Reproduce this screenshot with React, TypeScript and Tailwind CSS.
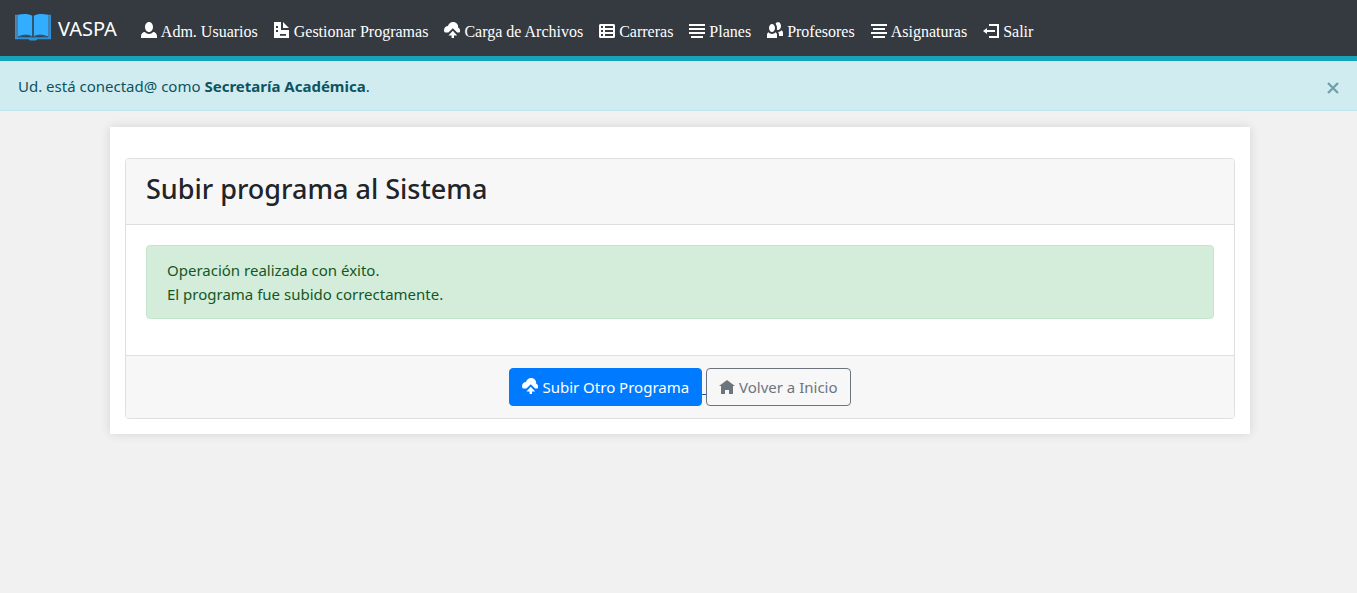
import { useState } from "react";

const icons = {
  person:
    "M4 0c-1.1 0-2 1.12-2 2.5s.9 2.5 2 2.5 2-1.12 2-2.5-.9-2.5-2-2.5zm-2.09 5c-1.06.05-1.91.92-1.91 2v1h8v-1c0-1.08-.84-1.95-1.91-2-.54.61-1.28 1-2.09 1-.81 0-1.55-.39-2.09-1z",
  document:
    "M0 0v8h7.500v-4h-4v-4h-3.500zm4.500 0v3h3l-3-3zm-3.500 2h1v1h-1v-1zm0 2h1v1h-1v-1zm2 2h3v.9h-3v-.9z",
  cloudUpload:
    "M4.5 0c-1.21 0-2.27.86-2.5 2-1.1 0-2 .9-2 2 0 .5.15 1 .5 1.300h1.700l2.200-2.200 2.200 2.200h1c.3-.25.49-.5.49-.9 0-.65-.42-1.29-1-1.5v-.4c0-1.38-1.12-2.5-2.5-2.500zm-.1 4.400l-2.200 2.400h1.600v1.200h1.200v-1.200h1.600l-2.200-2.400z",
  spreadsheet:
    "M.75 1c-.41 0-.75.34-.75.75v5.5c0 .41.34.75.75.75h6.5c.41 0 .75-.34.75-.75v-5.5c0-.41-.34-.75-.75-.75h-6.5zm.25 1h1v1h-1v-1zm2 0h4v1h-4v-1zm-2 2h1v1h-1v-1zm2 0h4v1h-4v-1zm-2 2h1v1h-1v-1zm2 0h4v1h-4v-1z",
  justify: "M0 1v1h8v-1h-8zm0 2v1h8v-1h-8zm0 2v1h8v-1h-8zm1 2v1h6v-1h-6z",
  people:
    "M5.5 0c-.51 0-.95.35-1.22.88.45.54.72 1.28.72 2.13 0 .29-.03.55-.09.81.19.11.38.19.59.19.83 0 1.5-.9 1.5-2s-.67-2-1.5-2zm-3 1c-.83 0-1.5.9-1.5 2s.67 2 1.5 2 1.5-.9 1.5-2-.67-2-1.5-2zm4.75 3.16c-.43.51-1.02.82-1.69.84.27.38.44.84.44 1.34v.66h2v-1.66c0-.52-.31-.97-.75-1.19zm-6.5 1c-.44.22-.75.67-.75 1.19v1.66h5v-1.66c0-.52-.31-.97-.75-1.19-.45.53-1.06.84-1.75.84s-1.3-.32-1.75-.84z",
  center: "M0 1v1h8v-1h-8zm1 2v1h6v-1h-6zm-1 2v1h8v-1h-8zm1 2v1h6v-1h-6z",
  logout: "M3 1v1h4v5h-4v1h5v-7h-5zm-1 2l-2 1.5 2 1.5v-1h4v-1h-4v-1z",
  home: "M4 1l-4 3h1v4h2v-2h2v2h2v-4.03l1 .03-4-3z",
};

type IconName = keyof typeof icons;

function Icon({ name, className }: { name: IconName; className: string }) {
  return (
    <svg viewBox="0 0 8 8" className={`size-4 shrink-0 fill-current ${className}`} aria-hidden="true">
      <path d={icons[name]} />
    </svg>
  );
}

function BookLogo() {
  return (
    <svg viewBox="0 0 38 30" className="h-[30px] w-[38px] pb-0.5" preserveAspectRatio="none" aria-hidden="true">
      <path d="M1 2h3v24h30V2h3v26H23.500l-1.500 1.500h-6L14.500 28H1z" fill="#2b93dc" />
      <path d="M2.200 3h1.500v23H2.200zM34.300 3h1.500v23h-1.500z" fill="#55799a" />
      <path
        d="M4 2C9 .6 15 .6 18.300 3v22C15 22.600 9 22.600 4 25.300zM34 2C29 .6 23 .6 19.700 3v22c3.300-2.400 9.300-2.400 14.300.3z"
        fill="#33adff"
      />
      <path d="M4 26c5-2.200 11-2.200 15 0 4-2.200 10-2.200 15 0" fill="none" stroke="#3b6180" strokeWidth="1" />
      <path d="M19 3v22" stroke="#35506a" strokeWidth="1.200" />
    </svg>
  );
}

const links: { icon: IconName; label: string }[] = [
  { icon: "person", label: "Adm. Usuarios" },
  { icon: "document", label: "Gestionar Programas" },
  { icon: "cloudUpload", label: "Carga de Archivos" },
  { icon: "spreadsheet", label: "Carreras" },
  { icon: "justify", label: "Planes" },
  { icon: "people", label: "Profesores" },
  { icon: "center", label: "Asignaturas" },
  { icon: "logout", label: "Salir" },
];

export default function App() {
  const [showNotice, setShowNotice] = useState(true);

  return (
    <div className="min-h-screen bg-[#f1f1f1] font-['Noto_Sans',sans-serif] text-[15px] leading-6 text-[#212529]">
      <nav className="flex min-h-[61px] flex-wrap items-center border-b-[5px] border-[#17a2b8] bg-[#343a40] px-3.5 text-white">
        <a href="#" className="mr-6 flex items-center gap-1.5">
          <BookLogo />
          <span className="pt-0.5 text-xl leading-7">VASPA</span>
        </a>
        <ul className="flex flex-wrap items-center gap-x-4 pt-2 font-['Liberation_Serif',serif] text-base">
          {links.map((link) => (
            <li key={link.label}>
              <a href="#" className="flex gap-1">
                <Icon name={link.icon} className="mt-0.5" />
                {link.label}
              </a>
            </li>
          ))}
        </ul>
      </nav>

      {showNotice && (
        <div
          role="alert"
          className="flex items-center justify-between border-b border-[#bee5eb] bg-[#d1ecf1] pt-[13px] pr-[17px] pb-3 pl-[18px] text-[#0c5460]"
        >
          <p>
            Ud. está conectad@ como <strong>Secretaría Académica</strong>.
          </p>
          <button type="button" aria-label="Cerrar" onClick={() => setShowNotice(false)} className="pt-1 text-[#6fa0aa]">
            <svg viewBox="0 0 14 14" className="size-3.5" aria-hidden="true">
              <path d="M2 2l10 10M12 2L2 12" stroke="currentColor" strokeWidth="2.300" />
            </svg>
          </button>
        </div>
      )}

      <div className="pt-4 pl-[3px]">
        <main className="mx-auto max-w-[1140px] bg-white px-[15px] pt-[31px] pb-[15px] shadow-[0_0_10px_rgba(0,0,0,0.12)]">
          <section className="overflow-hidden rounded border border-[#dfdfdf]">
            <header className="border-b border-[#dfdfdf] bg-[#f7f7f7] px-5 pt-[13px] pb-[18px]">
              <h1 className="text-[27px] leading-[34px] font-medium">Subir programa al Sistema</h1>
            </header>
            <div className="px-5 pt-5 pb-9">
              <div role="status" className="rounded border border-[#c3e6cb] bg-[#d4edda] px-5 py-3 text-[#155724]">
                <p>Operación realizada con éxito.</p>
                <p>El programa fue subido correctamente.</p>
              </div>
            </div>
            <footer className="flex flex-wrap justify-center border-t border-[#dfdfdf] bg-[#f7f7f7] py-3">
              <a href="#" className="flex text-[#0056b3]">
                <span className="flex gap-1 rounded border border-[#007bff] bg-[#007bff] px-3 py-1.5 text-white">
                  <Icon name="cloudUpload" className="mt-[3px]" />
                  Subir Otro Programa
                </span>
                <span className="py-[7px] whitespace-pre underline"> </span>
              </a>
              <a href="#" className="flex gap-1 rounded border border-[#6c757d] px-3 py-1.5 text-[#6c757d]">
                <Icon name="home" className="mt-[3px]" />
                Volver a Inicio
              </a>
            </footer>
          </section>
        </main>
      </div>
    </div>
  );
}
